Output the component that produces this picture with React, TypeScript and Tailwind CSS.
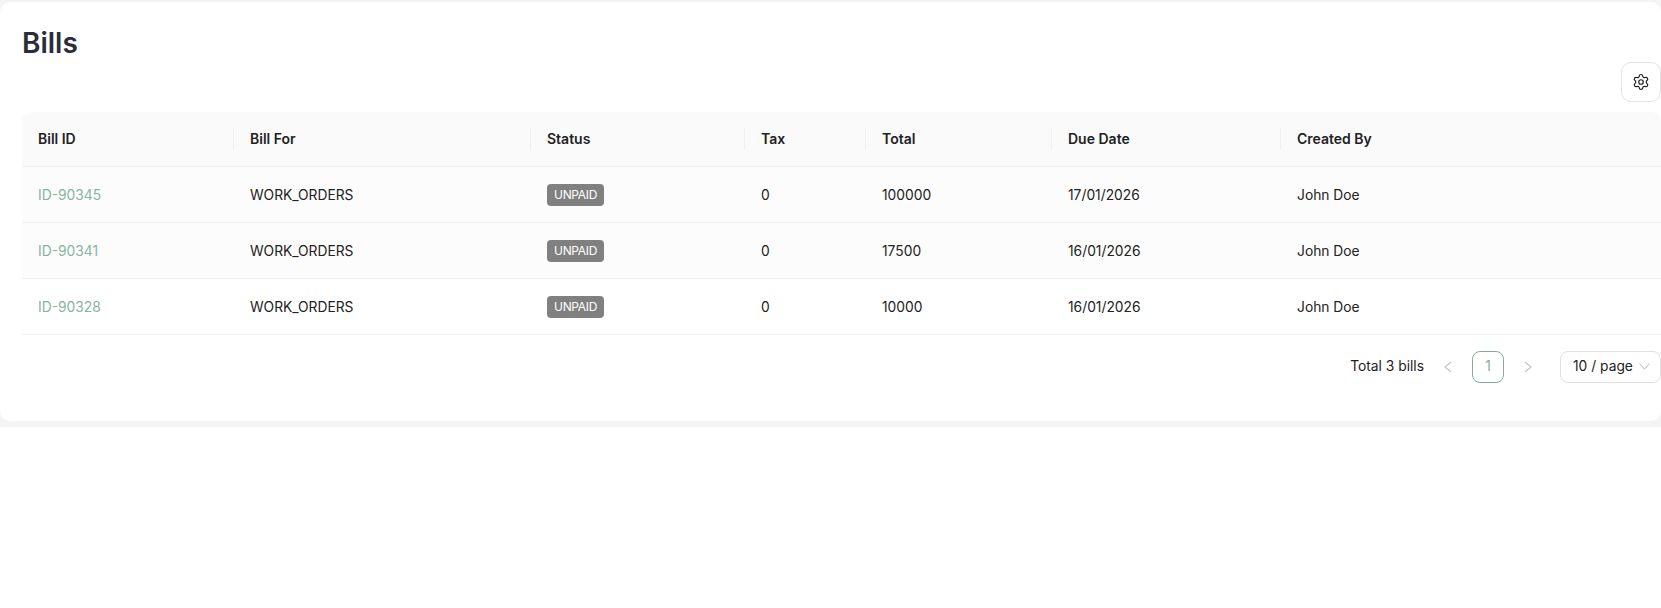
import React from "react";
import { Settings } from "lucide-react";

type Bill = {
  id: string;
  billFor: string;
  status: string;
  tax: number;
  total: number;
  dueDate: string;
  createdBy: string;
};

const BILLS: Bill[] = [
  { id: "ID-90345", billFor: "WORK_ORDERS", status: "UNPAID", tax: 0, total: 100000, dueDate: "17/01/2026", createdBy: "John Doe" },
  { id: "ID-90341", billFor: "WORK_ORDERS", status: "UNPAID", tax: 0, total: 17500, dueDate: "16/01/2026", createdBy: "John Doe" },
  { id: "ID-90328", billFor: "WORK_ORDERS", status: "UNPAID", tax: 0, total: 10000, dueDate: "16/01/2026", createdBy: "John Doe" },
];

const COLUMNS = [
  { label: "Bill ID", width: "w-[212px]" },
  { label: "Bill For", width: "w-[297px]" },
  { label: "Status", width: "w-[214px]" },
  { label: "Tax", width: "w-[121px]" },
  { label: "Total", width: "w-[186px]" },
  { label: "Due Date", width: "w-[229px]" },
  { label: "Created By", width: "w-auto" },
];

// thin antd-style chevrons, lucide's are too narrow for these
const PageArrow: React.FC<{ points: string }> = ({ points }) => (
  <svg width="10" height="12" viewBox="0 0 10 12" fill="none" stroke="#c4c4c4" strokeWidth="1.1">
    <polyline points={points} />
  </svg>
);

const App: React.FC = () => {
  return (
    <div className="min-h-[608px] w-[1661px] overflow-hidden bg-white font-['Inter','Liberation_Sans',sans-serif]">
      <div className="h-[427px] bg-[#f4f4f4] pt-[2px]">
        <main className="h-[419px] rounded-[10px] bg-white pl-[22px]">
          <h1 className="pt-[22px] text-[28px] leading-[38px] font-semibold text-[#2a2d3a]">Bills</h1>

          <div className="flex h-[50px] items-start justify-end">
            <button className="flex h-[40px] w-[40px] items-center justify-center rounded-[10px] border border-[#e3e3e3] bg-white text-[#222]">
              <Settings size={18} strokeWidth={1.6} />
            </button>
          </div>

          <table className="w-full table-fixed border-collapse text-[13.8px] text-[#222]">
            <thead>
              <tr className="h-[54px] border-b border-[#f0f0f0] bg-[#fafafa]">
                {COLUMNS.map((col, i) => (
                  <th
                    key={col.label}
                    className={`${col.width} relative px-4 text-left text-[14px] font-semibold first:rounded-tl-[10px] last:rounded-tr-[10px]`}
                  >
                    {col.label}
                    {i < COLUMNS.length - 1 && (
                      <span className="absolute top-1/2 right-0 h-[22px] w-px -translate-y-1/2 bg-[#f0f0f0]" />
                    )}
                  </th>
                ))}
              </tr>
            </thead>
            <tbody>
              {BILLS.map((bill, i) => (
                <tr key={bill.id} className={`h-[56px] border-b border-[#f0f0f0] ${i < 2 ? "bg-[#fcfcfc]" : "bg-white"}`}>
                  <td className="px-4 pt-[2px] text-[#87b3a2]">{bill.id}</td>
                  <td className="px-4 pt-[2px]">{bill.billFor}</td>
                  <td className="px-4 pt-[2px]">
                    <span className="inline-flex h-[22px] items-center rounded-[4px] bg-[#808080] px-[7px] text-[12px] tracking-[-0.3px] text-white">
                      {bill.status}
                    </span>
                  </td>
                  <td className="px-4 pt-[2px]">{bill.tax}</td>
                  <td className="px-4 pt-[2px]">{bill.total}</td>
                  <td className="px-4 pt-[2px]">{bill.dueDate}</td>
                  <td className="px-4 pt-[2px]">{bill.createdBy}</td>
                </tr>
              ))}
            </tbody>
          </table>

          <div className="mt-[16px] flex h-[32px] items-center justify-end text-[13.8px] text-[#222]">
            <span className="-mt-[1px]">Total 3 bills</span>
            <button className="ml-[8px] flex h-[32px] w-[32px] items-center justify-center">
              <PageArrow points="8,1 2,6 8,11" />
            </button>
            <button className="ml-[8px] flex h-[32px] w-[32px] items-center justify-center rounded-[8px] border border-[#7fb09c] text-[#7fb09c]">
              1
            </button>
            <button className="ml-[8px] flex h-[32px] w-[32px] items-center justify-center">
              <PageArrow points="2,1 8,6 2,11" />
            </button>
            <button className="ml-[16px] flex h-[32px] w-[101px] items-center justify-between rounded-[8px] border border-[#e0e0e0] pr-[10px] pl-[12px]">
              <span>10 / page</span>
              <svg width="11" height="7" viewBox="0 0 11 7" fill="none" stroke="#c4c4c4" strokeWidth="1.1">
                <polyline points="0.5,0.5 5.5,6 10.5,0.5" />
              </svg>
            </button>
          </div>
        </main>
      </div>
    </div>
  );
};

export default App;
